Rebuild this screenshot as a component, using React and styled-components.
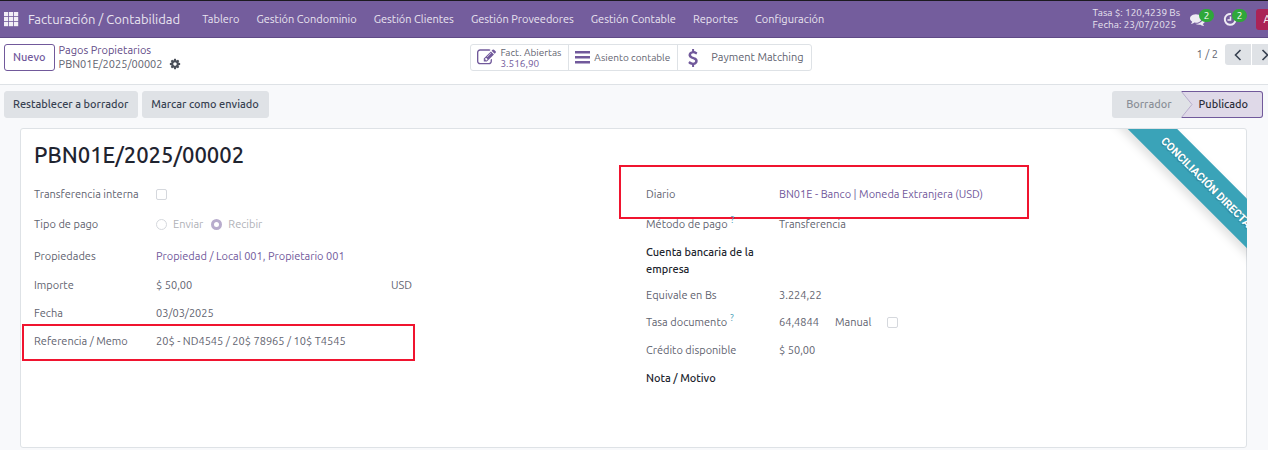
import React from 'react'
import styled, { createGlobalStyle, css } from 'styled-components'

const GlobalStyle = createGlobalStyle`
  * {
    box-sizing: border-box;
  }
  body {
    margin: 0;
    background: #f8f9fb;
    color: #5f636f;
    font-family: Ubuntu, "Noto Sans", "Open Sans", sans-serif;
    font-size: 11px;
    line-height: 17px;
    overflow: hidden;
  }
  button, input {
    font: inherit;
    margin: 0;
  }
  a {
    text-decoration: none;
  }
`

/* the bars run a little past the right edge of the window */
const Page = styled.div`
  width: calc(100% + 16px);
  border-top: 1px solid #1c1a20;
`

const Navbar = styled.header`
  display: flex;
  align-items: center;
  height: 37px;
  padding: 0 6px 0 4px;
  background: #745d9d;
  border-bottom: 1px solid #5f4a86;
  color: #e9e4f0;
`

const AppsButton = styled.button`
  display: flex;
  padding: 0;
  border: 0;
  background: none;
  color: #f2eff6;
`

const Brand = styled.a`
  margin: 0 22px 0 9px;
  color: inherit;
  font-size: 13px;
  white-space: nowrap;
`

const Menu = styled.nav`
  display: flex;
  flex: 1;
  gap: 17px;
`

const MenuLink = styled.a`
  color: inherit;
  white-space: nowrap;
`

const Systray = styled.div`
  display: flex;
  align-items: center;
`

const Rate = styled.div`
  margin-right: 10px;
  font-size: 10px;
  line-height: 12px;
  white-space: nowrap;
`

const TrayButton = styled.button`
  position: relative;
  display: flex;
  width: 33px;
  padding: 0;
  border: 0;
  background: none;
  color: #efecf4;
`

const Badge = styled.span`
  position: absolute;
  top: -3px;
  left: 9px;
  width: 15px;
  height: 13px;
  border-radius: 7px;
  background: #2fa83a;
  color: #fff;
  font-size: 10px;
  line-height: 13px;
  text-align: center;
`

const Avatar = styled.button`
  width: 22px;
  height: 21px;
  padding: 0;
  border: 0;
  border-radius: 3px;
  background: #ab2356;
  color: #fff;
`

const ControlPanel = styled.div`
  display: grid;
  grid-template-columns: 1fr auto 1fr;
  align-items: start;
  height: 47px;
  padding: 6px 6px 0 4px;
  background: #fff;
  border-bottom: 1px solid #dee2e6;
`

const Trail = styled.div`
  display: flex;
  gap: 4px;
`

const Button = styled.button`
  height: 27px;
  padding: 0 9px 0 8px;
  border: 1px solid #dfe2e6;
  border-radius: 3px;
  background: #dfe2e6;
  color: #374151;
  font-weight: 500;
  white-space: nowrap;
  ${({ $outline }) => $outline && css`
    padding: 0 8px;
    border-color: #71599b;
    background: #fff;
    color: #71599b;
  `}
`

const Crumbs = styled.div`
  display: flex;
  flex-direction: column;
  line-height: 14px;
  margin-top: -1px;
  a {
    color: #5f4a86;
  }
`

const Current = styled.span`
  display: flex;
  align-items: center;
  gap: 6px;
`

const IconButton = styled.button`
  display: flex;
  padding: 0;
  border: 0;
  background: none;
  color: #4a4f59;
`

const StatButtons = styled.div`
  display: flex;
  border: 1px solid #dee2e6;
  border-radius: 3px;
`

const Stat = styled.button`
  display: flex;
  align-items: center;
  gap: ${({ $wide }) => ($wide ? 9 : 4)}px;
  height: 25px;
  padding: 0 7px 0 6px;
  border: 0;
  background: none;
  color: #5f636f;
  font-size: ${({ $wide }) => ($wide ? 11 : 10)}px;
  line-height: 11px;
  text-align: left;
  white-space: nowrap;
  & + & {
    border-left: 1px solid #dee2e6;
  }
  svg {
    color: #71599b;
  }
`

const StatValue = styled.span`
  display: block;
  color: #71599b;
`

const Pager = styled.div`
  display: flex;
  justify-content: flex-end;
  align-items: center;
  gap: 1px;
`

const PagerCount = styled.span`
  margin-right: 6px;
`

const PagerButton = styled.button`
  display: flex;
  align-items: center;
  justify-content: center;
  width: 26px;
  height: 21px;
  padding: 0;
  border: 0;
  border-radius: ${({ $side }) => ($side === 'left' ? '3px 0 0 3px' : '0 3px 3px 0')};
  background: #dfe2e6;
  color: #374151;
`

const StatusBar = styled.div`
  display: flex;
  justify-content: space-between;
  padding: 6px 21px 10px 4px;
`

const Actions = styled.div`
  display: flex;
  gap: 4px;
`

const Steps = styled.div`
  display: flex;
`

const Step = styled.button`
  position: relative;
  height: 27px;
  padding: 0 9px 0 14px;
  border: 0;
  border-radius: 3px 0 0 3px;
  background: #dfe2e6;
  color: #8a8f97;
  font-weight: 500;
  ${({ $active }) => $active && css`
    padding: 0 14px 0 18px;
    border: 1px solid #71599b;
    border-left: 0;
    border-radius: 0 3px 3px 0;
    background: #dfd9e8;
    color: #2b2d38;
  `}
`

const Chevron = styled.svg`
  position: absolute;
  top: -1px;
  left: 0;
`

const Sheet = styled.main`
  position: relative;
  margin: 0 37px 0 20px;
  padding: 9px 13px 55px;
  background: #fff;
  border: 1px solid #dee2e6;
  border-radius: 3px;
`

const Title = styled.h1`
  margin: 0 0 9px;
  color: #1f2430;
  font-size: 22px;
  font-weight: 500;
  line-height: 34px;
`

const Columns = styled.div`
  display: grid;
  grid-template-columns: 1fr 1fr;
  gap: 25px;
`

const Row = styled.div`
  position: relative;
  display: grid;
  grid-template-columns: ${({ $label }) => $label || 122}px 1fr;
  align-items: center;
  min-height: ${({ $height }) => $height || 27}px;
`

const Label = styled.label`
  color: ${({ $strong }) => ($strong ? '#22252e' : '#5f636f')};
  font-weight: ${({ $strong }) => ($strong ? 500 : 400)};
  max-width: 118px;
  white-space: ${({ $wrap }) => ($wrap ? 'normal' : 'nowrap')};
`

const Help = styled.sup`
  margin-left: 3px;
  color: #3f9bb5;
  font-size: 9px;
  line-height: 0;
`

const Value = styled.div`
  display: flex;
  align-items: center;
  a {
    color: #71599b;
  }
`

const Amount = styled.span`
  width: ${({ $width }) => $width}px;
`

const Check = styled.input`
  appearance: none;
  width: 11px;
  height: 11px;
  border: 1px solid #d5d8dd;
  border-radius: ${({ type }) => (type === 'radio' ? '50%' : '2px')};
  background: #fff;
  &[type='radio']:checked {
    border: 3px solid #b8accd;
  }
`

const Choice = styled.label`
  display: flex;
  align-items: center;
  gap: 6px;
  margin-right: 8px;
  color: #afb1b7;
`

const Manual = styled.label`
  width: 52px;
`

/* red frame drawn over a field */
const Mark = styled.span`
  position: absolute;
  top: ${({ $top }) => $top}px;
  left: ${({ $left }) => $left}px;
  width: ${({ $width }) => $width}px;
  height: ${({ $height }) => $height}px;
  border: 2px solid #f0142f;
  pointer-events: none;
`

const RibbonBox = styled.div`
  position: absolute;
  top: 0;
  right: -1px;
  width: 140px;
  height: 140px;
  overflow: hidden;
  pointer-events: none;
`

const Ribbon = styled.span`
  position: absolute;
  top: 36px;
  right: -72px;
  width: 226px;
  height: 35px;
  background: #3aa3b8;
  box-shadow: 0 5px 10px rgba(0, 0, 0, 0.12);
  color: #fff;
  font-family: Roboto, sans-serif;
  font-size: 11px;
  font-weight: 700;
  line-height: 35px;
  text-align: center;
  text-shadow: 0 1px 1px rgba(0, 0, 0, 0.25);
  text-transform: uppercase;
  transform: rotate(45deg);
`

const Icon = ({ size, path }) => (
  <svg width={size} height={size} viewBox="0 0 1792 1792" fill="currentColor" aria-hidden="true">
    <path d={path} />
  </svg>
)

const icons = {
  cog: 'M1152 896q0-106-75-181t-181-75-181 75-75 181 75 181 181 75 181-75 75-181zm512-109v222q0 12-8 23t-20 13l-185 28q-19 54-39 91 35 50 107 138 10 12 10 25t-9 23q-27 37-99 108t-94 71q-12 0-26-9l-138-108q-44 23-91 38-16 136-29 186-7 28-36 28h-222q-14 0-24.5-8.5t-11.5-21.5l-28-184q-49-16-90-37l-141 107q-10 9-25 9-14 0-25-11-126-114-165-168-7-10-7-23 0-12 8-23 15-21 51-66.5t54-70.5q-27-50-41-99l-183-27q-13-2-21-12.5t-8-23.5v-222q0-12 8-23t19-13l186-28q14-46 39-92-40-57-107-138-10-12-10-24 0-10 9-23 26-36 98.5-107.5t94.5-71.5q13 0 26 10l138 107q44-23 91-38 16-136 29-186 7-28 36-28h222q14 0 24.5 8.5t11.5 21.5l28 184q49 16 90 37l142-107q9-9 24-9 13 0 25 10 129 119 165 170 7 8 7 22 0 12-8 23-15 21-51 66.5t-54 70.5q26 50 41 98l183 28q13 2 21 12.5t8 23.5z',
  edit: 'M888 1184l116-116-152-152-116 116v56h96v96h56zm440-720q-16-16-33 1l-350 350q-17 17-1 33t33-1l350-350q17-17 1-33zm80 594v190q0 119-84.5 203.5t-203.5 84.5h-832q-119 0-203.5-84.5t-84.5-203.5v-832q0-119 84.5-203.5t203.5-84.5h832q63 0 117 25 15 7 18 23 3 17-9 29l-49 49q-14 14-32 8-23-6-45-6h-832q-66 0-113 47t-47 113v832q0 66 47 113t113 47h832q66 0 113-47t47-113v-126q0-13 9-22l64-64q15-15 35-7t20 29zm-96-738l288 288-672 672h-288v-288zm444 132l-92 92-288-288 92-92q28-28 68-28t68 28l152 152q28 28 28 68t-28 68z',
  dollar: 'M1362 1185q0 153-99.5 263.5t-258.5 136.5v175q0 14-9 23t-23 9h-135q-13 0-22.5-9.5t-9.5-22.5v-175q-66-9-127.5-31t-101.5-44.5-74-48-46.5-37.5-17.5-18q-17-21-2-41l103-135q7-10 23-12 15-2 24 9l2 2q113 99 243 125 37 8 74 8 81 0 142.5-43t61.5-122q0-28-15-53t-33.5-42-58.5-37.5-66-32-80-32.5q-39-16-61.5-25t-61.5-26.5-62.5-31-56.5-35.5-53.5-42.5-43.5-49-35.5-58-21-66.5-8.5-78q0-138 98-242t255-134v-180q0-13 9.5-22.5t22.5-9.5h135q14 0 23 9t9 23v176q57 6 110.5 23t87 33.5 63.5 37.5 39 29 15 14q17 18 5 38l-81 146q-8 15-23 16-14 3-27-7-3-3-14.5-12t-39-26.5-58.5-32-74.5-26-85.5-11.5q-95 0-155 43t-60 111q0 26 8.5 48t29.5 41.5 39.5 33 56 31 60.5 27 70 27.5q53 20 81 31.5t76 35 75.5 42.5 62 50 53 63.5 31.5 76.5 13 94z',
  comments: 'M1408 768q0 139-94 257t-256.5 186.5-353.5 68.5q-86 0-176-16-124 88-278 128-36 9-86 16h-3q-11 0-20.5-8t-11.5-21q-1-3-1-6.5t.5-6.5 2-6l2.5-5 3.5-5.5 4-5 4.5-5 4-4.5q5-6 23-25t26-29.5 22.5-29 25-38.5 20.5-44q-124-72-195-177t-71-224q0-139 94-257t256.5-186.5 353.5-68.5 353.5 68.5 256.5 186.5 94 257zm384 256q0 120-71 224.5t-195 176.5q10 24 20.5 44t25 38.5 22.5 29 26 29.5 23 25q1 1 4 4.5t4.5 5 4 5 3.5 5.5l2.5 5 2 6 .5 6.5-1 6.5q-3 14-13 22t-22 7q-50-7-86-16-154-40-278-128-90 16-176 16-271 0-472-132 58 4 88 4 161 0 309-45t264-129q125-92 192-212t67-254q0-77-23-152 129 71 204 178t75 230z',
}

const menu = [
  'Tablero',
  'Gestión Condominio',
  'Gestión Clientes',
  'Gestión Proveedores',
  'Gestión Contable',
  'Reportes',
  'Configuración',
]

const App = () => {
  return (
    <>
      <GlobalStyle />
      <Page>
        <Navbar>
          <AppsButton aria-label="Aplicaciones">
            <svg width="15" height="15" viewBox="0 0 15 15" fill="currentColor">
              {[0, 5, 10].map((y) => [0, 5, 10].map((x) => (
                <rect key={`${x}-${y}`} x={x} y={y} width="4.2" height="4.2" />
              )))}
            </svg>
          </AppsButton>
          <Brand href="#">Facturación / Contabilidad</Brand>
          <Menu>
            {menu.map((item) => (
              <MenuLink href="#" key={item}>{item}</MenuLink>
            ))}
          </Menu>
          <Systray>
            <Rate>
              Tasa $: 120,4239 Bs<br />
              Fecha: 23/07/2025
            </Rate>
            <TrayButton aria-label="Mensajes">
              <Icon size={15} path={icons.comments} />
              <Badge>2</Badge>
            </TrayButton>
            <TrayButton aria-label="Actividades">
              <svg width="14" height="14" viewBox="0 0 14 14" fill="none" stroke="currentColor" strokeWidth="2">
                <path d="M8 2a5.4 5.4 0 1 0 4.6 5.6" />
                <path d="M7.5 4.5V8H4.500" strokeWidth="1.5" />
              </svg>
              <Badge>2</Badge>
            </TrayButton>
            <Avatar>A</Avatar>
          </Systray>
        </Navbar>

        <ControlPanel>
          <Trail>
            <Button $outline>Nuevo</Button>
            <Crumbs>
              <a href="#">Pagos Propietarios</a>
              <Current>
                PBN01E/2025/00002
                <IconButton aria-label="Acciones">
                  <Icon size={12} path={icons.cog} />
                </IconButton>
              </Current>
            </Crumbs>
          </Trail>
          <StatButtons>
            <Stat>
              <Icon size={19} path={icons.edit} />
              <span>
                Fact. Abiertas
                <StatValue>3.516,90</StatValue>
              </span>
            </Stat>
            <Stat>
              <svg width="15" height="13" viewBox="0 0 15 13" fill="currentColor" aria-hidden="true">
                <path d="M0 0h15v2.5H0zM0 5h15v2.5H0zM0 10h15v2.5H0z" />
              </svg>
              Asiento contable
            </Stat>
            <Stat $wide>
              <Icon size={18} path={icons.dollar} />
              Payment Matching
            </Stat>
          </StatButtons>
          <Pager>
            <PagerCount>1 / 2</PagerCount>
            <PagerButton $side="left" aria-label="Anterior">
              <svg width="8" height="12" viewBox="0 0 8 12" fill="none" stroke="currentColor" strokeWidth="1.6">
                <path d="M6.5 1L1.5 6l5 5" />
              </svg>
            </PagerButton>
            <PagerButton $side="right" aria-label="Siguiente">
              <svg width="8" height="12" viewBox="0 0 8 12" fill="none" stroke="currentColor" strokeWidth="1.6">
                <path d="M1.5 1l5 5-5 5" />
              </svg>
            </PagerButton>
          </Pager>
        </ControlPanel>

        <StatusBar>
          <Actions>
            <Button>Restablecer a borrador</Button>
            <Button>Marcar como enviado</Button>
          </Actions>
          <Steps>
            <Step>Borrador</Step>
            <Step $active>
              <Chevron width="12" height="27" viewBox="0 0 12 27">
                <path d="M0 0l11 13.5L0 27z" fill="#dfe2e6" />
                <path d="M0 0l11 13.5L0 27" fill="none" stroke="#b8accd" />
              </Chevron>
              Publicado
            </Step>
          </Steps>
        </StatusBar>

        <Sheet>
          <RibbonBox>
            <Ribbon>Conciliación directa</Ribbon>
          </RibbonBox>
          <Title>PBN01E/2025/00002</Title>
          <Columns>
            <div>
              <Row>
                <Label htmlFor="interna">Transferencia interna</Label>
                <Value><Check type="checkbox" id="interna" disabled /></Value>
              </Row>
              <Row $height={32}>
                <Label as="span" id="tipo">Tipo de pago</Label>
                <Value role="radiogroup" aria-labelledby="tipo">
                  <Choice><Check type="radio" name="tipo" disabled />Enviar</Choice>
                  <Choice><Check type="radio" name="tipo" disabled defaultChecked />Recibir</Choice>
                </Value>
              </Row>
              <Row $height={32}>
                <Label as="span">Propiedades</Label>
                <Value><a href="#">Propiedad / Local 001, Propietario 001</a></Value>
              </Row>
              <Row>
                <Label as="span">Importe</Label>
                <Value><Amount $width={235}>$ 50,00</Amount>USD</Value>
              </Row>
              <Row $height={29}>
                <Label as="span">Fecha</Label>
                <Value>03/03/2025</Value>
              </Row>
              <Row>
                <Label as="span">Referencia / Memo</Label>
                <Value>20$ - ND4545 / 20$ 78965 / 10$ T4545</Value>
                <Mark $top={-4} $left={-12} $width={393} $height={37} />
              </Row>
            </div>
            <div>
              <Row $label={133}>
                <Label as="span">Diario</Label>
                <Value><a href="#">BN01E - Banco | Moneda Extranjera (USD)</a></Value>
                <Mark $top={-16} $left={-27} $width={410} $height={54} />
              </Row>
              <Row $label={133} $height={32}>
                <Label as="span">Método de pago<Help>?</Help></Label>
                <Value>Transferencia</Value>
              </Row>
              <Row $label={133} $height={42}>
                <Label as="span" $strong $wrap>Cuenta bancaria de la empresa</Label>
              </Row>
              <Row $label={133}>
                <Label as="span">Equivale en Bs</Label>
                <Value>3.224,22</Value>
              </Row>
              <Row $label={133}>
                <Label as="span">Tasa documento<Help>?</Help></Label>
                <Value>
                  <Amount $width={56}>64,4844</Amount>
                  <Manual htmlFor="manual">Manual</Manual>
                  <Check type="checkbox" id="manual" disabled />
                </Value>
              </Row>
              <Row $label={133} $height={29}>
                <Label as="span">Crédito disponible</Label>
                <Value>$ 50,00</Value>
              </Row>
              <Row $label={133}>
                <Label as="span" $strong>Nota / Motivo</Label>
              </Row>
            </div>
          </Columns>
        </Sheet>
      </Page>
    </>
  )
}

export default App
